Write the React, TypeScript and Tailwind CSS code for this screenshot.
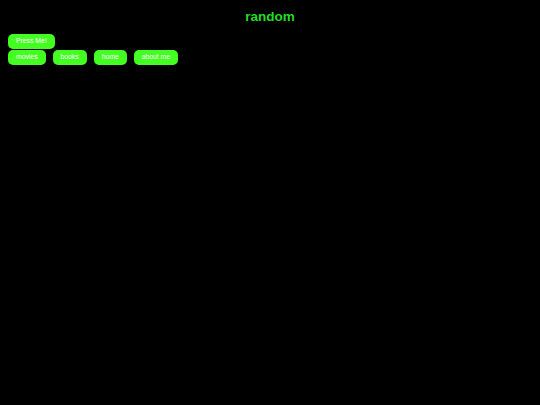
import React from 'react';

const btn =
    'h-[15px] px-2 flex items-center rounded-[5px] bg-[#44ff22] text-white text-[6.8px] leading-none';

export default function App() {
    const links = ['movies', 'books', 'home', 'about me'];

    return (
        <div className="min-h-screen bg-black font-['Liberation_Sans',Arial,sans-serif] px-2">
            <div className="h-[34px] pt-[9px] text-center">
                <h1 className="text-[13.5px] leading-[16px] font-bold text-[#22dd22]">random</h1>
            </div>
            <div className="flex">
                <button type="button" className={btn}>Press Me!</button>
            </div>
            <div className="flex gap-[7px] mt-px">
                {links.map((l) => (
                    <button key={l} type="button" className={btn}>
                        {l}
                    </button>
                ))}
            </div>
        </div>
    );
}
